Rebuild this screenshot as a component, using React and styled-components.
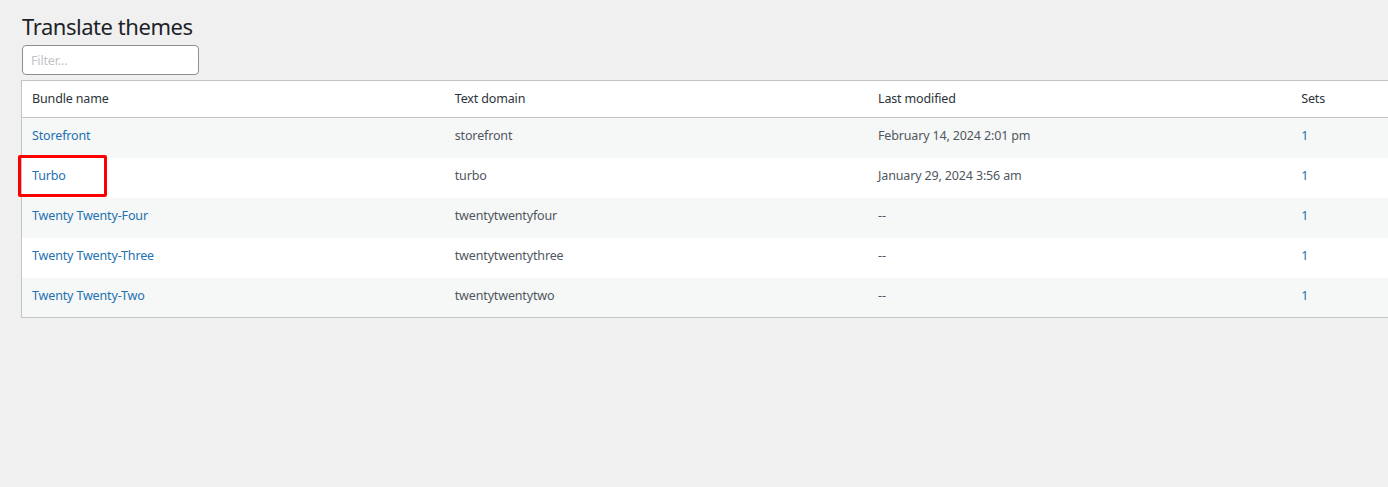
import React from 'react';
import styled, { createGlobalStyle } from 'styled-components';

const GlobalStyle = createGlobalStyle`
  html, body {
    margin: 0;
    padding: 0;
    background: #f0f0f1;
    overflow: hidden;
  }
  body {
    font-family: "Noto Sans", "Open Sans", sans-serif;
    font-size: 12.5px;
    letter-spacing: -0.15px;
    color: #3c434a;
  }
`;

const themes = [
  { name: 'Storefront', domain: 'storefront', modified: 'February 14, 2024 2:01 pm', sets: 1 },
  { name: 'Turbo', domain: 'turbo', modified: 'January 29, 2024 3:56 am', sets: 1, marked: true },
  { name: 'Twenty Twenty-Four', domain: 'twentytwentyfour', modified: '--', sets: 1 },
  { name: 'Twenty Twenty-Three', domain: 'twentytwentythree', modified: '--', sets: 1 },
  { name: 'Twenty Twenty-Two', domain: 'twentytwentytwo', modified: '--', sets: 1 },
];

export default function App() {
  return (
    <>
      <GlobalStyle />
      <Wrap>
        <Title>Translate themes</Title>
        <FilterInput placeholder='Filter...' />
        <Table>
          <thead>
            <tr>
              <Th>Bundle name</Th>
              <Th>Text domain</Th>
              <Th>Last modified</Th>
              <Th>Sets</Th>
            </tr>
          </thead>
          <tbody>
            {themes.map((t, i) => (
              <Row key={t.domain} $striped={i % 2 === 0}>
                <NameTd>
                  <Link href='#'>{t.name}</Link>
                  {t.marked && <Marker />}
                </NameTd>
                <Td>{t.domain}</Td>
                <Td>{t.modified}</Td>
                <Td><Link href='#'>{t.sets}</Link></Td>
              </Row>
            ))}
          </tbody>
        </Table>
      </Wrap>
    </>
  );
}

const Wrap = styled.div`
  padding: 12px 0 0 21px;
`;

const Title = styled.h1`
  margin: 0 0 0 1px;
  font-size: 22px;
  font-weight: 400;
  letter-spacing: -0.45px;
  line-height: 28px;
  color: #1d2327;
`;

const FilterInput = styled.input`
  display: block;
  box-sizing: border-box;
  margin: 5px 0 5px 1px;
  width: 177px;
  height: 30px;
  padding: 0 8px;
  border: 1px solid #8c8f94;
  border-radius: 4px;
  background: #fff;
  font-family: inherit;
  font-size: 12.5px;
  letter-spacing: -0.15px;
  color: #2c3338;
  outline: none;
  &::placeholder {
    color: #c3c4c7;
  }
`;

const Table = styled.table`
  width: 1694px;
  table-layout: fixed;
  border-collapse: collapse;
  border: 1px solid #c3c4c7;
  background: #fff;
  box-shadow: 0 1px 1px rgba(0, 0, 0, 0.04);
`;

const Th = styled.th`
  box-sizing: border-box;
  height: 37px;
  padding: 0 10px 1px;
  text-align: left;
  font-weight: 400;
  color: #2c3338;
  border-bottom: 1px solid #c3c4c7;
`;

const Row = styled.tr`
  background: ${p => (p.$striped ? '#f6f7f7' : '#fff')};
`;

const Td = styled.td`
  box-sizing: border-box;
  height: 40px;
  padding: 0 10px 4px;
  color: #50575e;
`;

const NameTd = styled(Td)`
  position: relative;
`;

const Link = styled.a`
  color: #2271b1;
  text-decoration: none;
`;

const Marker = styled.span`
  position: absolute;
  left: -4px;
  top: -3px;
  box-sizing: border-box;
  width: 89px;
  height: 42px;
  border: 3px solid #f00;
  border-radius: 2px;
`;
